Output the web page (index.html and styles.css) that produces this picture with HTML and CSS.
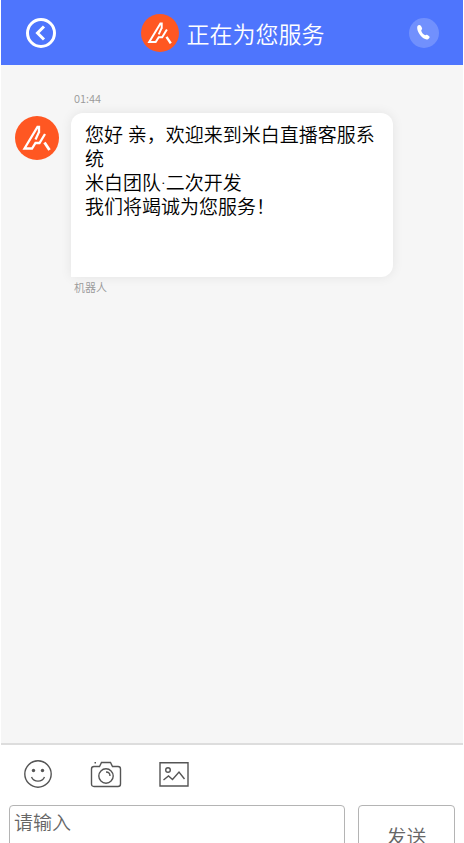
FILE: index.html
```html
<!DOCTYPE html>
<html lang="zh-CN">
<head>
<meta charset="utf-8">
<meta name="viewport" content="width=device-width, initial-scale=1">
<title>正在为您服务</title>
<link rel="stylesheet" href="styles.css">
</head>
<body>
<svg class="defs" aria-hidden="true">
  <symbol id="logo" viewBox="0 0 44 44">
    <circle cx="22" cy="22" r="22" fill="#ff5722"/>
    <path d="M24 17V11H22.500L9.500 32.500H17L20.500 27H24.500L30 18M24 16L20.500 23.500" fill="none" stroke="#fff" stroke-width="2.300" stroke-linejoin="miter"/>
    <path d="M29.500 26.500L34.500 34" fill="none" stroke="#fff" stroke-width="2.800"/>
  </symbol>
</svg>
<div class="app">
  <header class="header">
    <button class="icon-button" type="button" aria-label="返回">
      <svg class="back-icon" viewBox="0 0 30 30"><circle cx="15" cy="15" r="13.500"/><path d="M18 8.500L11.500 15L18 21.500"/></svg>
    </button>
    <div class="agent">
      <svg class="agent-logo" aria-hidden="true"><use href="#logo"/></svg>
      <h1 class="title">正在为您服务</h1>
    </div>
    <button class="icon-button" type="button" aria-label="电话">
      <svg class="phone-icon" viewBox="0 0 30 30"><circle cx="15" cy="15" r="15"/><path d="M8.500 8C9.500 6.500 11 6.500 12 8L13 10C13.500 11 12.500 11.800 12.200 12.500C12.500 14.500 14.500 16.700 16.200 17.200C17 16.500 17.800 16.500 18.500 17L20.200 18.300C21.200 19.200 20.300 20.500 19 21.200C16.500 22 13.500 20 11.500 17.500C9 14.500 7.500 10.500 8.500 8Z"/></svg>
    </button>
  </header>
  <main class="chat">
    <article class="message">
      <svg class="avatar" aria-hidden="true"><use href="#logo"/></svg>
      <div class="message-body">
        <time class="meta">01:44</time>
        <div class="bubble">您好 亲，欢迎来到米白直播客服系统<br>米白团队·二次开发<br>我们将竭诚为您服务！</div>
        <span class="meta">机器人</span>
      </div>
    </article>
  </main>
  <footer class="composer">
    <div class="tools">
      <button class="icon-button" type="button" aria-label="表情">
        <svg class="tool-icon" viewBox="0 0 32 32"><circle cx="16" cy="16" r="13.200"/><path d="M9.500 19C12 24.500 20 24.500 22.500 19"/><circle class="dot" cx="11.500" cy="12.500" r="1.700"/><circle class="dot" cx="20.500" cy="12.500" r="1.700"/></svg>
      </button>
      <button class="icon-button" type="button" aria-label="拍照">
        <svg class="tool-icon" viewBox="0 0 32 32"><path d="M4 8.500H9.500L11.500 4.500H20.500L22.500 8.500H28Q30.500 8.500 30.500 11V26Q30.500 28.500 28 28.500H4Q1.500 28.500 1.500 26V11Q1.500 8.500 4 8.500Z"/><circle cx="16" cy="18" r="7.200"/><path d="M16 14Q20 14 20 18M4.500 4.800H6"/></svg>
      </button>
      <button class="icon-button" type="button" aria-label="图片">
        <svg class="tool-icon" viewBox="0 0 32 32"><path d="M2 4.800H30V28H2Z"/><circle cx="10" cy="12" r="2.300"/><path d="M5.500 22L10.500 18L14.500 21.500L21 14L26.500 21"/></svg>
      </button>
    </div>
    <form class="entry">
      <textarea class="input" placeholder="请输入" aria-label="请输入"></textarea>
      <button class="send" type="button">发送</button>
    </form>
  </footer>
</div>
</body>
</html>
```

FILE: styles.css
```css
* {
  box-sizing: border-box;
}

body {
  margin: 0;
  padding: 0 1px;
  height: 100vh;
  overflow: hidden;
  background: #fff;
  font-family: "Noto Sans CJK SC", sans-serif;
  font-weight: 350;
}

.defs {
  display: none;
}

/* The composer runs past the bottom edge of the window. */
.app {
  display: flex;
  flex-direction: column;
  height: calc(100vh + 32px);
}

.header {
  flex: none;
  display: flex;
  align-items: center;
  justify-content: space-between;
  height: 65px;
  padding: 0 24px 0 25px;
  background: #4e75fd;
  color: #fff;
}

.icon-button {
  display: flex;
  padding: 0;
  border: 0;
  background: none;
  cursor: pointer;
}

.back-icon,
.phone-icon {
  width: 30px;
  height: 30px;
}

.back-icon {
  fill: none;
  stroke: #fff;
  stroke-width: 3;
}

.phone-icon {
  fill: #fff;
}

.phone-icon circle {
  fill-opacity: 0.2;
}

.agent {
  display: flex;
  align-items: center;
  gap: 8px;
}

.agent-logo {
  width: 38px;
  height: 38px;
}

.title {
  margin: 0;
  font-size: 23px;
  line-height: 32px;
  font-weight: 350;
}

.chat {
  flex: 1;
  min-height: 0;
  padding: 23px 70px 24px 14px;
  background: #f6f6f6;
}

.message {
  display: flex;
  gap: 12px;
}

.avatar {
  flex: none;
  width: 44px;
  height: 44px;
  margin-top: 28px;
}

.message-body {
  flex: 1;
  min-width: 0;
}

.meta {
  display: block;
  padding-left: 3px;
  color: #999;
  font-size: 11px;
  line-height: 20px;
}

.bubble {
  min-height: 164px;
  margin-top: 5px;
  padding: 11px 14px;
  border-radius: 12px 12px 12px 0;
  background: #fff;
  box-shadow: 0 0 12px rgba(0, 0, 0, 0.08);
  color: #000;
  font-family: Roboto, "Noto Sans CJK SC", sans-serif;
  font-size: 19px;
  line-height: 24px;
}

.composer {
  flex: none;
  padding: 13px 8px 8px;
  border-top: 2px solid #ddd;
  background: #fff;
}

.tools {
  display: flex;
  gap: 36px;
  padding-left: 13px;
}

.tool-icon {
  width: 32px;
  height: 32px;
  fill: none;
  stroke: #555;
  stroke-width: 1.4;
}

.tool-icon .dot {
  fill: #555;
  stroke: none;
}

.entry {
  display: flex;
  gap: 13px;
  margin-top: 15px;
}

.input,
.send {
  height: 62px;
  border: 1px solid #b4b4b4;
  border-radius: 4px;
  background: #fff;
  color: #666;
  font-family: inherit;
  font-size: 19px;
  font-weight: 350;
}

.input {
  flex: 1;
  min-width: 0;
  padding: 2px 4px;
  line-height: 28px;
  resize: none;
}

.input::placeholder {
  color: #666;
}

.send {
  width: 97px;
  padding: 0;
  font-size: 20px;
}
```
